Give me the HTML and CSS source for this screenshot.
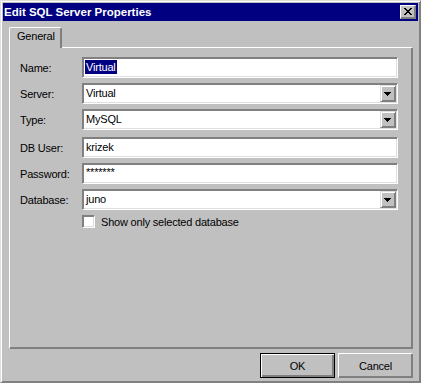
FILE: index.html
```html
<!DOCTYPE html>
<html>
<head>
<meta charset="utf-8">
<link rel="stylesheet" href="styles.css">
</head>
<body>
<div class="window">
  <div class="titlebar">
    <span class="title">Edit SQL Server Properties</span>
    <div class="close">
      <svg width="8" height="7" viewBox="0 0 8 7" shape-rendering="crispEdges">
        <path d="M0 0h2v1h-2zM6 0h2v1h-2zM1 1h2v1h-2zM5 1h2v1h-2zM2 2h4v1h-4zM3 3h2v1h-2zM2 4h4v1h-4zM1 5h2v1h-2zM5 5h2v1h-2zM0 6h2v1h-2zM6 6h2v1h-2z" fill="#000"/>
      </svg>
    </div>
  </div>
  <div class="body">
    <div class="tabs"><div class="tab">General</div></div>
    <div class="panel">
      <div class="group">
        <div class="row"><span class="label">Name:</span><div class="field"><span class="sel">Virtual</span></div></div>
        <div class="row"><span class="label">Server:</span><div class="field combo"><span class="val">Virtual</span><span class="drop"><svg width="7" height="4" viewBox="0 0 7 4" shape-rendering="crispEdges"><path d="M0 0h7v1h-7zM1 1h5v1h-5zM2 2h3v1h-3zM3 3h1v1h-1z" fill="#000"/></svg></span></div></div>
        <div class="row"><span class="label">Type:</span><div class="field combo"><span class="val">MySQL</span><span class="drop"><svg width="7" height="4" viewBox="0 0 7 4" shape-rendering="crispEdges"><path d="M0 0h7v1h-7zM1 1h5v1h-5zM2 2h3v1h-3zM3 3h1v1h-1z" fill="#000"/></svg></span></div></div>
      </div>
      <div class="group second">
        <div class="row"><span class="label">DB User:</span><div class="field"><span class="val">krizek</span></div></div>
        <div class="row"><span class="label">Password:</span><div class="field"><span class="val pw">*******</span></div></div>
        <div class="row"><span class="label">Database:</span><div class="field combo"><span class="val">juno</span><span class="drop"><svg width="7" height="4" viewBox="0 0 7 4" shape-rendering="crispEdges"><path d="M0 0h7v1h-7zM1 1h5v1h-5zM2 2h3v1h-3zM3 3h1v1h-1z" fill="#000"/></svg></span></div></div>
      </div>
      <div class="check-row"><span class="checkbox"></span><span class="check-label">Show only selected database</span></div>
    </div>
    <div class="buttons">
      <div class="btn default">OK</div>
      <div class="btn">Cancel</div>
    </div>
  </div>
</div>
</body>
</html>
```
FILE: styles.css
```css
html, body {
  margin: 0;
  padding: 0;
  background: #c0c0c0;
}
body {
  font-family: "Liberation Sans", Arial, sans-serif;
  font-size: 11px;
  letter-spacing: -0.2px;
  color: #000;
}
.window {
  width: 421px;
  height: 383px;
  box-sizing: border-box;
  border: 1px solid;
  border-color: #dfdfdf #808080 #808080 #dfdfdf;
  box-shadow: inset 1px 1px #fff, inset -1px -1px #808080;
  padding: 2px;
  display: flex;
  flex-direction: column;
  background: #c0c0c0;
}
.titlebar {
  height: 18px;
  flex: none;
  background: #000080;
  color: #fff;
  display: flex;
  align-items: center;
  justify-content: space-between;
  padding: 0 2px 0 1px;
}
.title {
  font-weight: bold;
  font-size: 11.5px;
  letter-spacing: 0;
}
.close {
  width: 16px;
  height: 14px;
  box-sizing: border-box;
  background: #c0c0c0;
  border: 1px solid;
  border-color: #fff #808080 #808080 #fff;
  box-shadow: inset -1px -1px #808080;
  display: flex;
  align-items: center;
  justify-content: center;
  padding: 0 1px 1px 0;
}
.close svg { display: block; }
.body {
  flex: 1;
  display: flex;
  flex-direction: column;
  padding: 6px 5px 0 6px;
}
.tabs {
  display: flex;
  height: 20px;
  flex: none;
}
.tab {
  width: 53px;
  height: 21px;
  box-sizing: border-box;
  margin-bottom: -1px;
  border-left: 1px solid #fff;
  border-top: 1px solid #fff;
  border-right: 1px solid #808080;
  border-top-left-radius: 2px;
  border-top-right-radius: 2px;
  box-shadow: inset -1px 0 #808080;
  padding: 2px 0 0 7px;
  background: #c0c0c0;
  position: relative;
  z-index: 1;
}
.panel {
  height: 302px;
  flex: none;
  box-sizing: border-box;
  border: 1px solid;
  border-color: #fff #808080 #808080 #fff;
  box-shadow: inset -1px -1px #808080;
  padding: 9px 14px 0 10px;
}
.group.second { margin-top: 7px; }
.row {
  display: flex;
  align-items: center;
  height: 21px;
  margin-bottom: 5px;
}
.label {
  width: 62px;
  flex: none;
}
.field {
  flex: 1;
  height: 21px;
  box-sizing: border-box;
  background: #fff;
  border: 1px solid;
  border-color: #808080 #fff #fff #808080;
  box-shadow: inset 1px 1px #808080, inset -1px -1px #dfdfdf;
  padding: 1px;
  display: flex;
  align-items: flex-start;
  justify-content: space-between;
}
.val {
  padding: 1px 0 0 2px;
  line-height: 14px;
}
.val.pw { padding-top: 0; }
.sel {
  margin: 1px 0 0 1px;
  background: #000080;
  color: #fff;
  line-height: 14px;
  padding: 0 1px;
}
.drop {
  width: 16px;
  height: 17px;
  box-sizing: border-box;
  background: #c0c0c0;
  border: 1px solid;
  border-color: #dfdfdf #808080 #808080 #dfdfdf;
  box-shadow: inset 1px 1px #fff, inset -1px -1px #808080;
  display: flex;
  align-items: center;
  justify-content: center;
  padding: 0 1px 0 0;
}
.drop svg { display: block; }
.check-row {
  display: flex;
  align-items: center;
  margin: 2px 0 0 62px;
  height: 13px;
}
.checkbox {
  width: 13px;
  height: 13px;
  box-sizing: border-box;
  background: #fff;
  border: 1px solid;
  border-color: #808080 #fff #fff #808080;
  box-shadow: inset 1px 1px #808080, inset -1px -1px #dfdfdf;
  flex: none;
}
.check-label {
  margin-left: 6px;
}
.buttons {
  display: flex;
  justify-content: flex-end;
  gap: 3px;
  margin-top: 4px;
}
.btn {
  width: 75px;
  height: 25px;
  box-sizing: border-box;
  background: #c0c0c0;
  border: 1px solid;
  border-color: #fff #808080 #808080 #fff;
  box-shadow: inset -1px -1px #808080;
  display: flex;
  align-items: center;
  justify-content: center;
}
.btn.default {
  border: 1px solid #000;
  box-shadow: inset 1px 1px #fff, inset -1px -1px #808080, inset -2px -2px #808080;
}
```
